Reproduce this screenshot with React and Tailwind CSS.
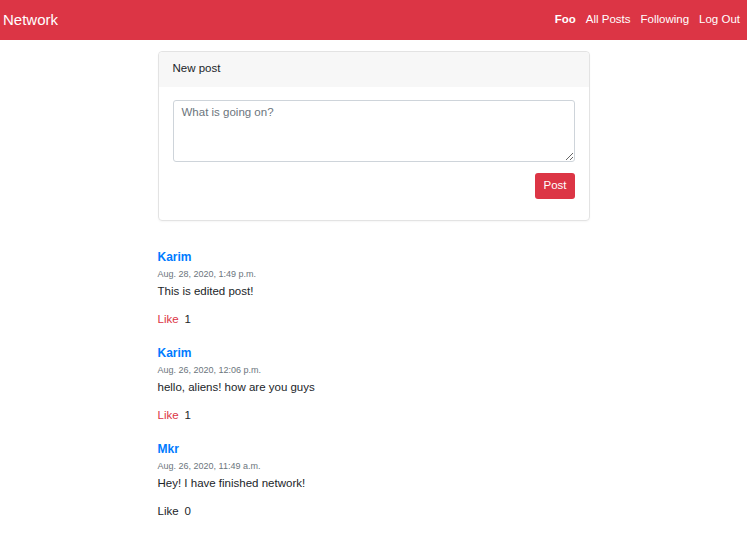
import React from "react";

const posts = [
  { user: "Karim", date: "Aug. 28, 2020, 1:49 p.m.", body: "This is edited post!", likes: 1, liked: true },
  { user: "Karim", date: "Aug. 26, 2020, 12:06 p.m.", body: "hello, aliens! how are you guys", likes: 1, liked: true },
  { user: "Mkr", date: "Aug. 26, 2020, 11:49 a.m.", body: "Hey! I have finished network!", likes: 0, liked: false },
];

const Post = ({ post }) => (
  <div className="h-[96px]">
    <a href="#" className="block h-[17px] leading-[17px] text-[12px] font-bold text-[#007bff]">
      {post.user}
    </a>
    <div className="h-[17px] leading-[17px] text-[9px] text-[#6c757d]">{post.date}</div>
    <div className="h-[17px] leading-[17px] text-[11.5px] text-[#212529]">{post.body}</div>
    <div className="mt-[11px] h-[17px] leading-[17px] text-[11.5px] flex gap-[6px]">
      <span className={post.liked ? "text-[#dc3545] font-medium" : "text-[#212529] font-medium"}>Like</span>
      <span className="text-[#212529]">{post.likes}</span>
    </div>
  </div>
);

export default function App() {
  return (
    <div className="min-h-[539px] bg-white font-['Liberation_Sans',Arial,sans-serif]">
      {/* Navbar */}
      <nav className="h-10 bg-[#dc3545] flex items-center justify-between pl-[3px] pr-[7px]">
        <a href="#" className="text-[15px] text-white">Network</a>
        <ul className="flex items-center gap-[10px] text-[11.5px] text-white">
          <li className="font-bold">Foo</li>
          <li>All Posts</li>
          <li>Following</li>
          <li>Log Out</li>
        </ul>
      </nav>

      <div className="w-[432px] mx-auto">
        {/* New post card */}
        <div className="mt-[11px] border border-[#e3e3e3] rounded-[4px] shadow-[0_1px_2px_rgba(0,0,0,0.04)]">
          <div className="h-[35px] bg-[#f7f7f7] px-[14px] pb-[2px] flex items-center text-[11.5px] text-[#212529] rounded-t-[4px]">
            New post
          </div>
          <div className="px-[14px] pt-[13px] pb-[21px]">
            <textarea
              placeholder="What is going on?"
              className="block w-full h-[62px] border border-[#ced4da] rounded-[3px] px-[8px] py-[3px] text-[11.5px] text-[#495057] placeholder:text-[#6c757d] outline-none"
            />
            <div className="flex justify-end mt-[11px]">
              <button className="h-[26px] px-[8px] bg-[#dc3545] text-white text-[11.5px] rounded-[3px]">Post</button>
            </div>
          </div>
        </div>

        {/* Posts */}
        <div className="mt-[28px]">
          {posts.map((p, i) => (
            <Post key={i} post={p} />
          ))}
        </div>
      </div>
    </div>
  );
}
